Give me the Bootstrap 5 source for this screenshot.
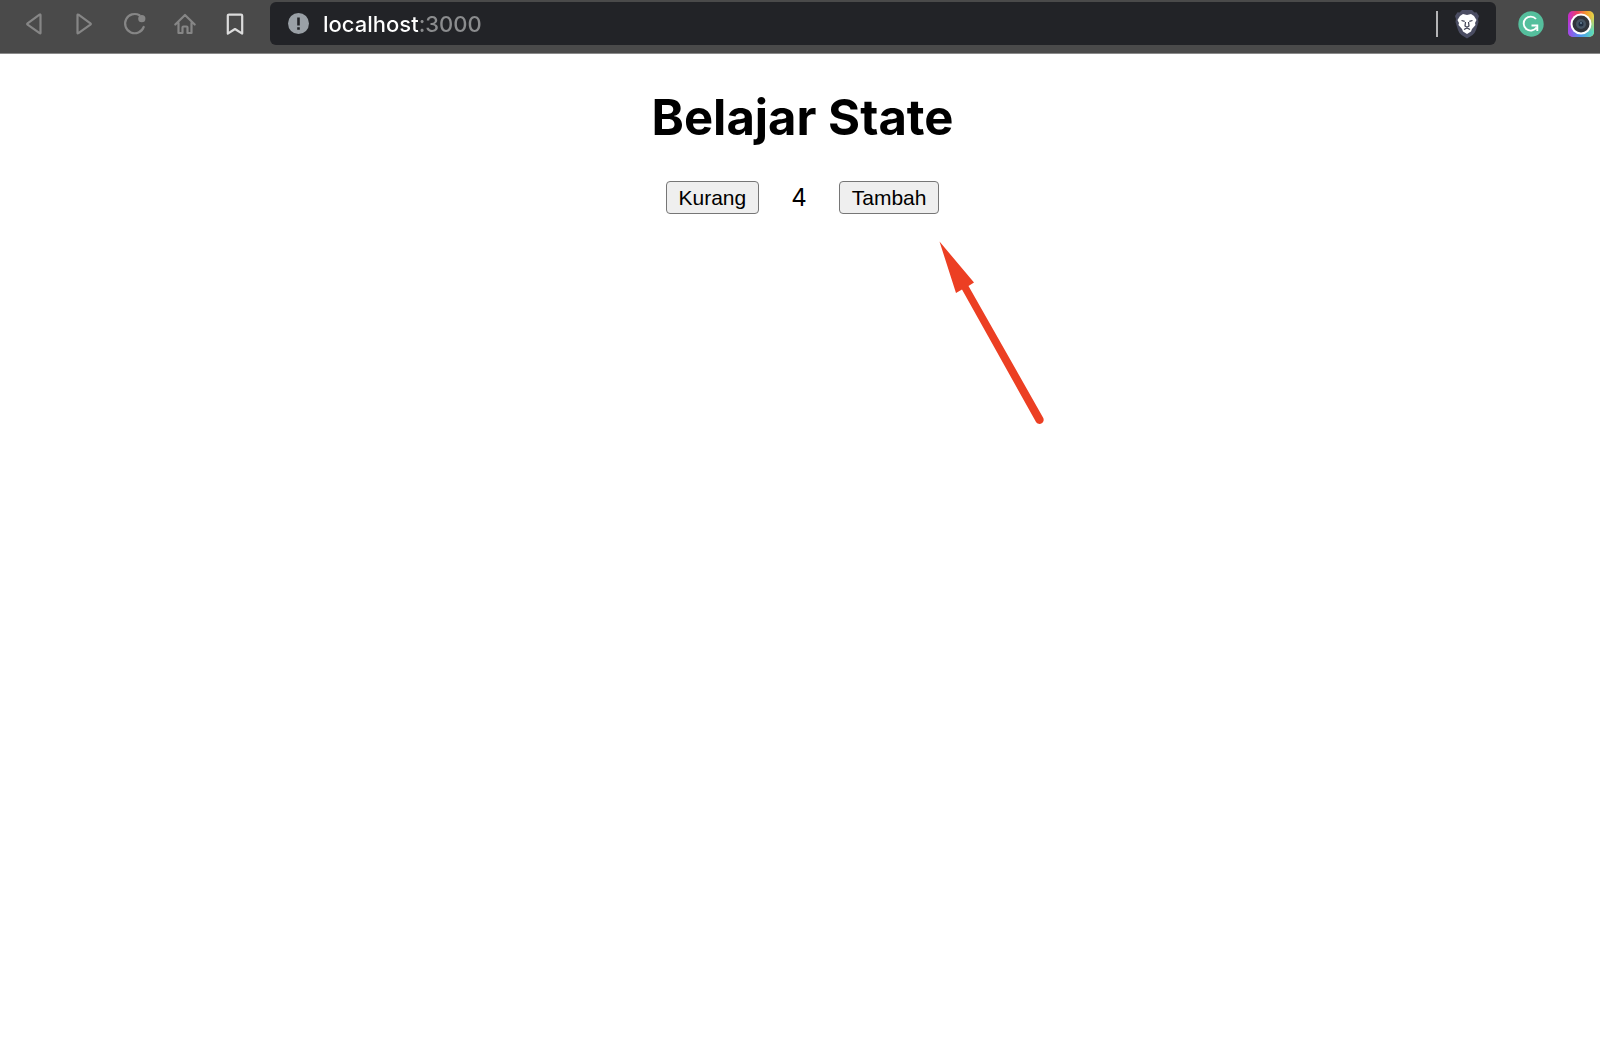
<!DOCTYPE html>
<html lang="id">
<head>
<meta charset="utf-8">
<meta name="viewport" content="width=device-width, initial-scale=1">
<title>Belajar State</title>
<link href="https://cdn.jsdelivr.net/npm/bootstrap@5.3.0/dist/css/bootstrap.min.css" rel="stylesheet">
<style>
  body { font-family: Inter, "Liberation Sans", sans-serif; color: #000; }
  .toolbar { background: #4a4a4a; border-bottom: 1px solid #8a8a8a; height: 54px; padding: 2px 0 8px 10px; }
  .tool { width: 50px; height: 43px; color: #868686; }
  .tool.lit { color: #dcdcdc; }
  .tool svg { fill: none; stroke: currentColor; stroke-width: 2.2; stroke-linejoin: round; stroke-linecap: round; }
  .address { background: #222327; border-radius: 6px; height: 43px; margin-left: 10px; padding: 0 16px 0 18px; }
  .url { font-size: 22px; font-weight: 500; line-height: 28px; outline: 0; margin-left: 14px;
    background: linear-gradient(90deg, #fff 96px, #8b8c8e 96px); -webkit-background-clip: text; background-clip: text;
    -webkit-text-fill-color: transparent; }
  .divider { width: 2px; height: 26px; background: #b4b4b6; margin-right: 16px; }
  .extensions { padding: 0 5px 0 22px; gap: 24px; }
  .page { padding: 36px 0 0 5px; }
  .title { font-size: 49px; font-weight: 700; line-height: 56px; margin-bottom: 35px; }
  .counter { gap: 32px; }
  .step { font: 21px/23px "Liberation Sans", Arial, sans-serif; color: #000; background: #efefef; border: 1px solid #767676; border-radius: 4px; padding: 4px 12px; }
  .value { font-size: 24px; line-height: 30px; }
  .arrow-mark { margin: 27px 0 0 379px; }
</style>
</head>
<body class="bg-white">
<header class="toolbar d-flex align-items-center">
  <nav class="d-flex" aria-label="Navigasi">
    <button class="tool btn p-0 border-0 d-flex align-items-center justify-content-center" aria-label="Kembali">
      <svg width="24" height="24" viewBox="0 0 24 24"><path d="M17.500 3v18q0 .8-.9.2L4.600 12.700q-.9-.7 0-1.400L16.500 2.700q1-.6 1 .3z"/></svg>
    </button>
    <button class="tool btn p-0 border-0 d-flex align-items-center justify-content-center" aria-label="Maju">
      <svg width="24" height="24" viewBox="0 0 24 24"><path d="M4.500 3v18q0 .8.9.2L17.400 12.700q.9-.7 0-1.400L5.500 2.700Q4.500 2.200 4.500 3z"/></svg>
    </button>
    <button class="tool btn p-0 border-0 d-flex align-items-center justify-content-center" aria-label="Muat ulang">
      <svg width="24" height="24" viewBox="0 0 24 24"><path d="M16.500 3.300A9.600 9.600 0 1 0 20.700 15"/><circle cx="18.800" cy="6.700" r="3.600" fill="currentColor" stroke="none"/></svg>
    </button>
    <button class="tool btn p-0 border-0 d-flex align-items-center justify-content-center" aria-label="Beranda">
      <svg width="24" height="24" viewBox="0 0 24 24"><path d="M2.300 12.500 12 3l9.700 9.500M5.500 11v10h4v-5.500q0-1 1-1h3q1 0 1 1V21h4V11"/></svg>
    </button>
    <button class="tool lit btn p-0 border-0 d-flex align-items-center justify-content-center" aria-label="Markah">
      <svg width="24" height="24" viewBox="0 0 24 24"><path d="M6 2.600h12q1.200 0 1.200 1.200V21.600L12 17l-7.200 4.600V3.800Q4.800 2.600 6 2.600z"/></svg>
    </button>
  </nav>
  <div class="address d-flex align-items-center flex-grow-1">
    <svg width="21" height="21" viewBox="0 0 21 21" aria-hidden="true"><circle cx="10.500" cy="10.500" r="10.500" fill="#9aa0a6"/><path d="M9.200 4.500h2.600v8H9.200zM9.200 14.200h2.600v2.600H9.200z" fill="#222327"/></svg>
    <input class="url flex-grow-1 border-0 p-0" type="text" value="localhost:3000" aria-label="Alamat" spellcheck="false">
    <span class="divider"></span>
    <button class="btn p-0 border-0 d-flex" aria-label="Brave Shields">
      <svg width="26" height="30" viewBox="0 0 26 30"><path d="M8 1h10l2.500 2.500 2-.2L25 7l-1 3 .5 3-2.500 8q-1 3-3.500 5L13 29.500 7.500 26Q5 24 4 21L1.500 13 2 10 1 7l2.500-3.700 2 .2z" fill="#4b4d62"/><path d="m9 5 4 1 4-1 3 2 2.500 4-1.500 3 .5 2-3.500 4-1 2.500-4 2.500-4-2.500L8 20l-3.500-4 .5-2-1.500-3L6 7z" fill="#fff"/><path d="m7.500 11.500 3.200.8M18.500 11.500l-3.200.8M11.500 13l-.5 4 2 1.200 2-1.200-.5-4M10 20.500l3-1.500 3 1.500" fill="none" stroke="#3f4154" stroke-width="1.200"/></svg>
    </button>
  </div>
  <div class="extensions d-flex align-items-center">
    <button class="btn p-0 border-0 d-flex" aria-label="Grammarly">
      <svg width="26" height="26" viewBox="0 0 26 26"><circle cx="13" cy="13" r="12.700" fill="#55bf9d"/><path d="M18 8A7 7 0 1 0 18.500 16.500M13.500 14.500h5.800V20" fill="none" stroke="#fff" stroke-width="1.900"/></svg>
    </button>
    <button class="btn p-0 border-0 d-flex" aria-label="Tangkapan layar">
      <svg width="27" height="26" viewBox="0 0 27 26">
        <defs>
          <linearGradient id="warm"><stop stop-color="#c22bd0"/><stop offset=".35" stop-color="#ee4164"/><stop offset=".7" stop-color="#f39a2d"/><stop offset="1" stop-color="#e2d84b"/></linearGradient>
          <linearGradient id="cool"><stop stop-color="#a247e8"/><stop offset=".5" stop-color="#4b9af0"/><stop offset="1" stop-color="#5fe0b4"/></linearGradient>
          <linearGradient id="fade" x2="0" y2="1"><stop offset=".2" stop-color="#000"/><stop offset=".8" stop-color="#fff"/></linearGradient>
          <mask id="lower"><rect width="27" height="26" fill="url(#fade)"/></mask>
        </defs>
        <rect width="26" height="26" rx="5" fill="url(#warm)"/><rect width="26" height="26" rx="5" fill="url(#cool)" mask="url(#lower)"/>
        <circle cx="13" cy="13" r="10.500" fill="#fff"/><circle cx="13" cy="13" r="8.500" fill="#30343b"/><circle cx="13" cy="13" r="5" fill="#465462"/><circle cx="13" cy="13" r="2.500" fill="#202e40"/><circle cx="13" cy="12" r="1" fill="#668197"/>
      </svg>
    </button>
  </div>
</header>
<main class="page d-flex flex-column align-items-center">
  <h1 class="title">Belajar State</h1>
  <div class="counter d-flex align-items-center">
    <button class="step" type="button">Kurang</button>
    <span class="value">4</span>
    <button class="step" type="button">Tambah</button>
  </div>
  <svg class="arrow-mark" width="106" height="184" viewBox="0 0 106 184" aria-hidden="true"><path d="M.500 .5 35 41.500l-5.500 3.500L104 176.500a4 4 0 0 1-7 4.500L23 48.500l-6 3.500z" fill="#ec3f23"/></svg>
</main>
<script src="https://cdn.jsdelivr.net/npm/bootstrap@5.3.0/dist/js/bootstrap.bundle.min.js"></script>
</body>
</html>
